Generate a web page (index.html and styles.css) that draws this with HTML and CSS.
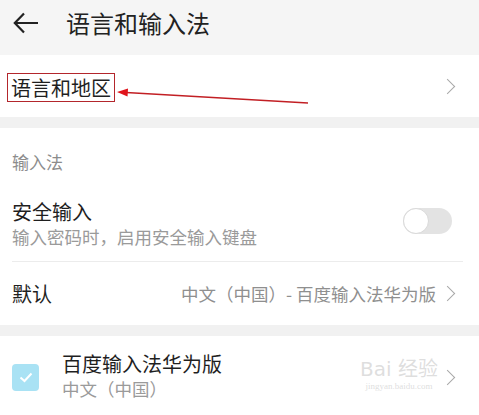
FILE: index.html
```html
<!DOCTYPE html>
<html lang="zh-CN">
<head>
    <meta charset="UTF-8">
    <meta name="viewport" content="width=device-width, initial-scale=1.0">
    <title>语言和输入法</title>
    <link rel="stylesheet" href="styles.css">
</head>
<body>
    <div class="header">
        <svg class="back" width="26" height="22" viewBox="0 0 26 22">
            <path d="M25 11H2M11 1.5L1.8 11L11 20.5" fill="none" stroke="#222" stroke-width="2.2"/>
        </svg>
        <span class="header-title">语言和输入法</span>
    </div>

    <div class="row region-row">
        <span class="marked">语言和地区</span>
        <span class="chevron"></span>
        <svg class="pointer" width="200" height="20" viewBox="0 0 200 20">
            <line x1="192" y1="15" x2="10" y2="4.5" stroke="#c21f24" stroke-width="1.3"/>
            <path d="M1 4L12 0.5L11.5 8.5Z" fill="#e0141b"/>
        </svg>
    </div>

    <div class="band"></div>

    <div class="section-label">输入法</div>

    <div class="row secure-row">
        <div class="texts">
            <div class="title">安全输入</div>
            <div class="sub">输入密码时，启用安全输入键盘</div>
        </div>
        <div class="toggle"><span class="knob"></span></div>
    </div>
    <div class="divider"></div>

    <div class="row default-row">
        <span class="title">默认</span>
        <span class="value">中文（中国）- 百度输入法华为版</span>
        <span class="chevron"></span>
    </div>

    <div class="band"></div>

    <div class="row ime-row">
        <span class="check">
            <svg width="14" height="11" viewBox="0 0 14 11">
                <path d="M1.5 5.5L5.5 9L12.5 1.5" fill="none" stroke="#fff" stroke-width="2"/>
            </svg>
        </span>
        <div class="texts">
            <div class="title">百度输入法华为版</div>
            <div class="sub">中文（中国）</div>
        </div>
        <span class="chevron"></span>
        <div class="watermark">
            <span class="wm-big">Bai 经验</span>
            <span class="wm-small">jingyan.baidu.com</span>
        </div>
    </div>
</body>
</html>
```

FILE: styles.css
```css
body {
    margin: 0;
    background-color: #ffffff;
    font-family: "Noto Sans CJK SC", "Noto Sans", sans-serif;
    color: #1f1f1f;
    width: 479px;
    overflow: hidden;
}
.header {
    height: 55px;
    background-color: #f5f5f5;
    display: flex;
    align-items: center;
    padding-left: 13px;
}
.back {
    margin-top: -10px;
}
.header-title {
    font-size: 24px;
    margin-left: 27px;
    margin-top: -10px;
    color: #222;
}
.row {
    display: flex;
    align-items: center;
    padding: 0 12px;
    position: relative;
}
.region-row {
    height: 62px;
    font-size: 20px;
}
.marked {
    border: 1px solid #b3262c;
    padding: 0 3px;
    margin-left: -5px;
    line-height: 27px;
    margin-top: 3px;
}
.pointer {
    position: absolute;
    left: 116px;
    top: 33px;
}
.chevron {
    margin-left: auto;
    width: 10px;
    height: 10px;
    border-top: 1.5px solid #a8a8a8;
    border-right: 1.5px solid #a8a8a8;
    transform: rotate(45deg);
    margin-right: 14px;
}
.band {
    height: 11px;
    background-color: #f1f1f1;
}
.section-label {
    height: 71px;
    box-sizing: border-box;
    padding: 24px 12px 0;
    font-size: 17px;
    line-height: 20px;
    color: #8c8c8c;
}
.title {
    font-size: 20px;
    line-height: 26px;
}
.sub {
    font-size: 17.5px;
    line-height: 24px;
    color: #9a9a9a;
}
.secure-row {
    padding-bottom: 12px;
}
.toggle {
    margin-left: auto;
    margin-right: 15px;
    width: 49px;
    height: 26px;
    border-radius: 13px;
    background-color: #e3e3e3;
    margin-bottom: 6px;
    position: relative;
}
.knob {
    position: absolute;
    left: 0;
    top: 0;
    width: 24px;
    height: 24px;
    border-radius: 50%;
    background-color: #fff;
    border: 1px solid #d9d9d9;
}
.divider {
    height: 1px;
    background-color: #ececec;
    margin: 0 16px 0 12px;
}
.default-row {
    height: 63px;
}
.value {
    margin-left: auto;
    font-size: 17.5px;
    color: #8f8f8f;
}
.default-row .chevron {
    margin-left: 6px;
}
.ime-row {
    padding-top: 15px;
    padding-bottom: 10px;
}
.check {
    width: 27px;
    height: 27px;
    border-radius: 4px;
    background-color: #a9e2f4;
    display: flex;
    align-items: center;
    justify-content: center;
    margin-right: 23px;
    margin-top: 2px;
}
.ime-row .chevron {
    margin-top: 2px;
}
.watermark {
    position: absolute;
    left: 360px;
    top: 22px;
    display: flex;
    flex-direction: column;
    align-items: center;
    color: rgba(200, 200, 200, 0.6);
}
.wm-big {
    font-family: "DejaVu Sans", sans-serif;
    font-size: 20px;
    line-height: 22px;
}
.wm-small {
    font-family: "Liberation Serif", serif;
    font-size: 9px;
    line-height: 12px;
}
```
